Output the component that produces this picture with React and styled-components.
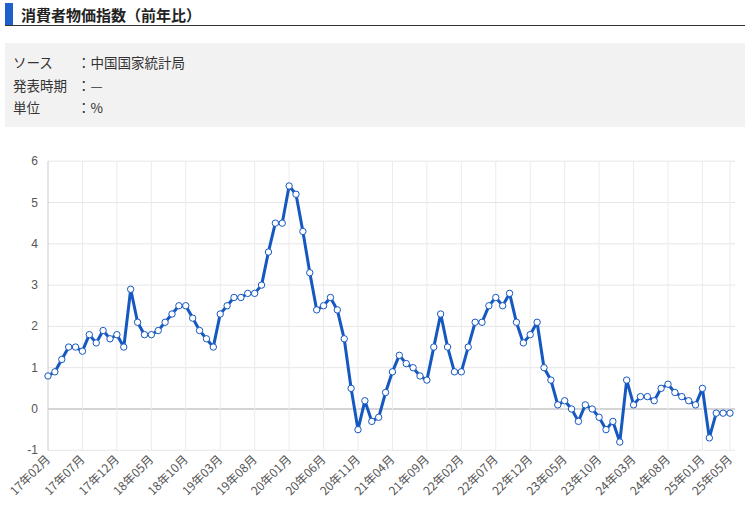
import React from 'react';
import styled, { createGlobalStyle } from 'styled-components';

const Global = createGlobalStyle`
  body {
    margin: 0;
    background: #fff;
    font-family: "Noto Sans CJK JP", "Liberation Sans", sans-serif;
    color: #333;
  }
`;

const Page = styled.div`
  padding: 3px 10px 0 5px;
`;

const Heading = styled.h2`
  margin: 0;
  display: flex;
  align-items: center;
  gap: 8px;
  height: 22px;
  font-size: 15px;
  font-weight: bold;
  color: #222;
  border-bottom: 1px solid #333;
  line-height: 1;
  &::before {
    content: '';
    width: 8px;
    height: 22px;
    background: #1e5fcc;
  }
`;

const Info = styled.div`
  margin-top: 17px;
  background: #f2f2f2;
  padding: 8px 8px 8px 8px;
  font-size: 13.5px;
  line-height: 22.5px;
  color: #333;
`;

const Row = styled.div`
  display: flex;
`;

const Label = styled.span`
  width: 64px;
`;

const Chart = styled.svg`
  display: block;
  margin: 22px 0 0 -5px;
`;

const data = [
  0.8, 0.9, 1.2, 1.5, 1.5, 1.4, 1.8, 1.6, 1.9, 1.7, 1.8,
  1.5, 2.9, 2.1, 1.8, 1.8, 1.9, 2.1, 2.3, 2.5, 2.5, 2.2, 1.9,
  1.7, 1.5, 2.3, 2.5, 2.7, 2.7, 2.8, 2.8, 3.0, 3.8, 4.5, 4.5,
  5.4, 5.2, 4.3, 3.3, 2.4, 2.5, 2.7, 2.4, 1.7, 0.5, -0.5, 0.2,
  -0.3, -0.2, 0.4, 0.9, 1.3, 1.1, 1.0, 0.8, 0.7, 1.5, 2.3, 1.5,
  0.9, 0.9, 1.5, 2.1, 2.1, 2.5, 2.7, 2.5, 2.8, 2.1, 1.6, 1.8,
  2.1, 1.0, 0.7, 0.1, 0.2, 0.0, -0.3, 0.1, 0.0, -0.2, -0.5, -0.3,
  -0.8, 0.7, 0.1, 0.3, 0.3, 0.2, 0.5, 0.6, 0.4, 0.3, 0.2, 0.1,
  0.5, -0.7, -0.1, -0.1, -0.1,
];

const X0 = 48;
const STEP = (730 - 48) / 99;
const Y0 = 260; // value 0 (svg coords, svg top at page y=150)
const UNIT = 41.3;
const px = (i) => X0 + i * STEP;
const py = (v) => Y0 - v * UNIT;

const labelOf = (i) => {
  const m = i + 1; // 0 -> 2017/02
  const y = 17 + Math.floor(m / 12);
  const mm = (m % 12) + 1;
  return `${y}年${String(mm).padStart(2, '0')}月`;
};

const ticks = [];
for (let i = 0; i < 100; i += 5) ticks.push(i);
ticks.push(99);

export default function App() {
  const path = data.map((v, i) => `${i ? 'L' : 'M'}${px(i).toFixed(1)},${py(v).toFixed(1)}`).join(' ');
  return (
    <Page>
      <Global />
      <Heading>消費者物価指数（前年比）</Heading>
      <Info>
        <Row><Label>ソース</Label>：中国国家統計局</Row>
        <Row><Label>発表時期</Label>：—</Row>
        <Row><Label>単位</Label>：%</Row>
      </Info>
      <Chart width="755" height="376" viewBox="0 0 755 376">
        {[-1, 0, 1, 2, 3, 4, 5, 6].map((v) => (
          <g key={v}>
            <line x1={X0} x2={735} y1={py(v)} y2={py(v)} stroke={v === 0 ? '#aaa' : '#e6e6e6'} />
            <text x={38} y={py(v) + 4} textAnchor="end" fontSize="12" fill="#555" fontFamily="Liberation Sans, sans-serif">{v}</text>
          </g>
        ))}
        {ticks.map((i) => (
          <g key={i}>
            <line x1={px(i)} x2={px(i)} y1={py(6)} y2={py(-1)} stroke={i === 0 ? '#ccc' : '#ebebeb'} />
            <text
              transform={`translate(${px(i) + 3},${py(-1) + 10}) rotate(-45)`}
              textAnchor="end"
              fontSize="12"
              fill="#555"
              fontFamily="Noto Sans CJK JP, sans-serif"
            >{labelOf(i)}</text>
          </g>
        ))}
        <path d={path} fill="none" stroke="#1558c0" strokeWidth="3" strokeLinejoin="round" />
        {data.map((v, i) => (
          <circle key={i} cx={px(i)} cy={py(v)} r="3.2" fill="#fff" stroke="#1558c0" strokeWidth="1" />
        ))}
      </Chart>
    </Page>
  );
}
